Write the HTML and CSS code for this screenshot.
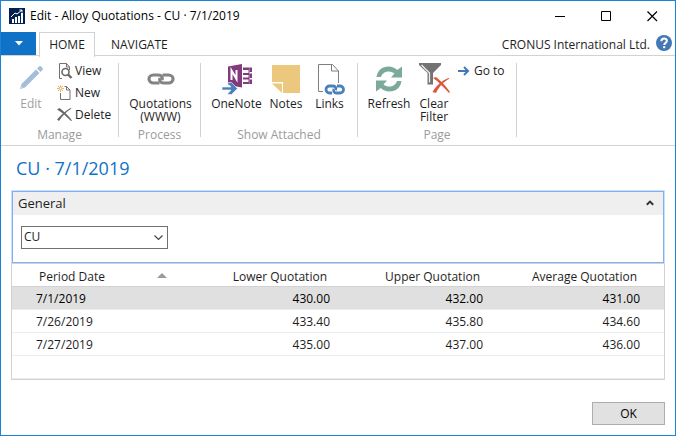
FILE: index.html
```html
<!DOCTYPE html>
<html lang="en">
<head>
<meta charset="utf-8">
<title>Edit - Alloy Quotations</title>
<link rel="stylesheet" href="styles.css">
</head>
<body>
<div class="window">
  <header class="titlebar">
    <svg class="app-icon" width="16" height="16" viewBox="0 0 16 16" aria-hidden="true">
      <rect width="16" height="16" fill="#04204f"/>
      <path d="M3 15v-4h2v4zM6 15V9h2v6zM9 15V8h2v7zM12 15V5h2v10z" fill="#fff"/>
      <path d="M2 9 6 5l2 1 5-4M10.500 2H13v2.500" fill="none" stroke="#fff"/>
    </svg>
    <h1 class="title">Edit - Alloy Quotations - CU · 7/1/2019</h1>
    <div class="window-buttons">
      <button class="window-button" aria-label="Minimize"><svg width="11" height="11" viewBox="0 0 11 11"><path d="M0 5.500h10" stroke="#000"/></svg></button>
      <button class="window-button" aria-label="Maximize"><svg width="11" height="11" viewBox="0 0 11 11"><path d="M.5.5h9v9h-9z" fill="none" stroke="#000"/></svg></button>
      <button class="window-button" aria-label="Close"><svg width="11" height="11" viewBox="0 0 11 11"><path d="m.5.500 9.500 9.500M10 .5.500 10" stroke="#000" stroke-width="1.200"/></svg></button>
    </div>
  </header>

  <nav class="tabs">
    <button class="file-menu" aria-label="Application menu"><svg width="8" height="5" viewBox="0 0 8 5"><path d="M0 0h8L4 4.500z" fill="#fff"/></svg></button>
    <button class="tab tab-active">HOME</button>
    <button class="tab">NAVIGATE</button>
    <span class="company">CRONUS International Ltd.</span>
    <button class="help" aria-label="Help"><svg width="16" height="16" viewBox="0 0 16 16"><circle cx="8" cy="8" r="8" fill="#4378b5"/><path d="M5.400 6.300c0-3.700 5.500-3.400 5.500-.5C10.900 7.900 8.200 7.900 8.200 10" fill="none" stroke="#fff" stroke-width="2"/><path d="M7.100 11.200h2.200v2H7.100z" fill="#fff"/></svg></button>
  </nav>

  <section class="ribbon" aria-label="Actions">
    <div class="group">
      <div class="actions actions-start">
        <button class="action action-edit" disabled>
          <svg width="24" height="28" viewBox="0 0 24 28"><path d="m1 24 1.500-5L17 4.500l3.500 3.500L6 22.500zM18 3.500l2-2c.6-.6 1.500-.6 2 0L23.500 3c.6.6.6 1.500 0 2l-2 2z" fill="#a3bddb"/><path d="m1 24 1-3 2 2z" fill="#c8d8ea"/></svg>
          <span>Edit</span>
        </button>
        <div class="small-actions">
          <button class="small-action"><svg width="16" height="16" viewBox="0 0 16 16"><path d="M5 15.500H2.500V.5h7l3 3.500v3M9.500.5V4h3" fill="none" stroke="#737373"/><circle cx="8.500" cy="9" r="3.500" fill="#fff" stroke="#686868" stroke-width="1.600"/><path d="m11 11.500 3.500 3.500" stroke="#686868" stroke-width="2.400"/></svg><span>View</span></button>
          <button class="small-action"><svg width="16" height="16" viewBox="0 0 16 16"><path d="M3.500 8v6.500h9.500V5L9.500 1.500H7.500M9.500 1.500V5H13" fill="none" stroke="#737373"/><path d="M3.500 0v7M0 3.500h7M1 1l5 5M6 1 1 6" stroke="#e8ad55" stroke-width=".9"/><circle cx="3.500" cy="3.500" r="1" fill="#fff"/></svg><span>New</span></button>
          <button class="small-action"><svg width="16" height="16" viewBox="0 0 16 16"><path d="M0 2.500 2.500 1C6 3.500 11 8 15 13.500l-1 .5C9 9 4.500 5 0 2.500z" fill="#686868"/><path d="M14.500 1.500C9 5 5 9 2 14L0 12.500C4 8 8 4 13.500 1z" fill="#686868"/></svg><span>Delete</span></button>
        </div>
      </div>
      <h2 class="group-name">Manage</h2>
    </div>
    <div class="group">
      <div class="actions">
        <button class="action">
          <svg width="28" height="28" viewBox="0 0 28 28"><g fill="none" stroke="#848484" stroke-width="3.200"><path d="M12.500 18H6.500a4.500 4 0 0 1 0-8h5c3 0 4.500 2.500 3.500 5"/><path d="M15.500 10h6a4.500 4 0 0 1 0 8h-5c-3 0-4.500-2.500-3.500-5"/></g></svg>
          <span>Quotations<br>(WWW)</span>
        </button>
      </div>
      <h2 class="group-name">Process</h2>
    </div>
    <div class="group">
      <div class="actions">
        <button class="action action-onenote">
          <svg width="32" height="32" viewBox="0 0 32 32"><path d="M7 3.500 21 1v23.500L7 22z" fill="#823a7c"/><path d="M10.500 17V7.500l5 8.500V7" fill="none" stroke="#fff" stroke-width="2"/><path d="M22 4.500h6.500v16.500H22v-2h5.500v-2.500H22v-2h5.500V12H22v-2h5.500V7H22z" fill="#823a7c"/><path d="M28.500 4.500H31V9h-2.500zM28.500 10.500H31V15h-2.500zM28.500 16.500H31V21h-2.500z" fill="#823a7c"/><path d="M1 24h9l-4-4.500h4.500l6 6-6 6H6l4-4.500H1z" fill="#4a80bb" stroke="#fff" stroke-width=".6"/></svg>
          <span>OneNote</span>
        </button>
        <button class="action action-notes">
          <svg width="28" height="28" viewBox="0 0 28 28"><path d="M0 0h28v28H11V17H0zM0 18.500h10V28z" fill="#ecc77e"/></svg>
          <span>Notes</span>
        </button>
        <button class="action action-links">
          <svg width="30" height="32" viewBox="0 0 30 32"><path d="M8 28.500H3.500V1.500h14l6 6.500V20M16.500 1.500V8h7" fill="#fff" stroke="#7f7f7f"/><g fill="none" stroke="#fff" stroke-width="5"><path d="M17 30h-2.500a3.500 3.500 0 0 1 0-7H18c2.500 0 3.500 2 2.500 4"/><path d="M22 23h3a3.500 3.500 0 0 1 0 7h-3.500c-2.500 0-3.500-2-2.500-4"/></g><g fill="none" stroke="#4a80bb" stroke-width="2.800"><path d="M17 30h-2.500a3.500 3.500 0 0 1 0-7H18c2.500 0 3.500 2 2.500 4"/><path d="M22 23h3a3.500 3.500 0 0 1 0 7h-3.500c-2.500 0-3.500-2-2.500-4"/></g></svg>
          <span>Links</span>
        </button>
      </div>
      <h2 class="group-name">Show Attached</h2>
    </div>
    <div class="group">
      <div class="actions actions-start">
        <button class="action action-refresh">
          <svg width="28" height="28" viewBox="0 0 28 28"><path d="M1.500 12C2.500 5.500 7 1.500 13.500 1.500c3.500 0 6.500 1.300 8.700 3.500L27 1.500V12.500H16l3.500-4C14.500 4.500 7.500 6.500 6 12z" fill="#7baa98"/><path transform="rotate(180 14 14)" d="M1.500 12C2.500 5.500 7 1.500 13.500 1.500c3.500 0 6.500 1.300 8.700 3.500L27 1.500V12.500H16l3.500-4C14.500 4.500 7.500 6.500 6 12z" fill="#7baa98"/></svg>
          <span>Refresh</span>
        </button>
        <button class="action action-filter">
          <svg width="32" height="32" viewBox="0 0 32 32"><path d="M1 0h22v2l-8 8v11.500H9.500V10L1 2z" fill="#737373"/><path d="m3.500 2 8 8v9.500" fill="none" stroke="#eee" stroke-width="1.300"/><path d="m15 15 3-1c5 4 10 9 14 15l-1 1c-5-5-10-11-16-15z" fill="#db593e"/><path d="M31.500 15.500C25 19 21 24 18 30l-3.500-1C18 23 23 18 30.500 15z" fill="#db593e"/></svg>
          <span>Clear<br>Filter</span>
        </button>
        <div class="small-actions">
          <button class="small-action small-goto"><svg width="12" height="16" viewBox="0 0 12 16"><path d="M0 8h10M6 4l4 4-4 4" fill="none" stroke="#4378b5" stroke-width="2"/></svg><span>Go to</span></button>
        </div>
      </div>
      <h2 class="group-name">Page</h2>
    </div>
  </section>

  <main class="content">
    <h2 class="page-title">CU · 7/1/2019</h2>
    <section class="panel">
      <button class="panel-head" aria-expanded="true"><span>General</span><svg width="8" height="6" viewBox="0 0 8 6"><path d="m.8 4.800 3.200-3.200 3.200 3.200" fill="none" stroke="#333" stroke-width="2"/></svg></button>
      <div class="panel-body">
        <div class="combo">
          <select aria-label="Alloy"><option>CU</option></select>
          <svg class="combo-arrow" width="9" height="6" viewBox="0 0 9 6" aria-hidden="true"><path d="m.5.500 4 4 4-4" fill="none" stroke="#444" stroke-width="1.200"/></svg>
        </div>
      </div>
    </section>
    <table class="quotes">
      <colgroup><col class="col-date"><col class="col-number"><col class="col-number"><col></colgroup>
      <thead>
        <tr><th scope="col"><div class="sorted">Period Date<svg width="10" height="9" viewBox="0 0 10 9" aria-hidden="true"><path d="M0 5 5 0l5 5z" fill="#9b9b9b"/></svg></div></th><th scope="col">Lower Quotation</th><th scope="col">Upper Quotation</th><th scope="col">Average Quotation</th></tr>
      </thead>
      <tbody>
        <tr class="selected"><td>7/1/2019</td><td>430.00</td><td>432.00</td><td>431.00</td></tr>
        <tr><td>7/26/2019</td><td>433.40</td><td>435.80</td><td>434.60</td></tr>
        <tr><td>7/27/2019</td><td>435.00</td><td>437.00</td><td>436.00</td></tr>
        <tr><td></td><td></td><td></td><td></td></tr>
      </tbody>
    </table>
    <footer class="footer"><button class="ok">OK</button></footer>
  </main>
</div>
</body>
</html>
```
FILE: styles.css
```css
* { box-sizing: border-box; }
body {
  margin: 0;
  background: #fff;
  color: #1e1e1e;
  font: 12px/16px "Open Sans", "Noto Sans", sans-serif;
}
button {
  margin: 0;
  padding: 0;
  border: 0;
  background: none;
  color: inherit;
  font: inherit;
}
h1, h2 { margin: 0; font: inherit; }
svg { display: block; flex: none; }

.window {
  display: flex;
  flex-direction: column;
  min-height: 100vh;
  border: 1px solid #1883d7;
}

.titlebar {
  display: flex;
  align-items: center;
  height: 30px;
  padding-left: 8px;
}
.title { flex: 1; margin-left: 5px; color: #000; white-space: nowrap; }
.window-buttons { display: flex; }
.window-button { display: grid; place-items: center; width: 46px; height: 28px; }

.tabs {
  display: flex;
  align-items: stretch;
  height: 25px;
  padding-right: 3px;
  border-bottom: 1px solid #d2d2d2;
}
.file-menu {
  display: grid;
  place-items: center;
  width: 35px;
  height: 23px;
  margin: 1px 3px 0 0;
  background: #1072c6;
}
.tab { padding: 3px 15px 0; border: 1px solid transparent; border-bottom: 0; }
.tab-active {
  width: 56px;
  height: 25px;
  margin-top: 1px;
  padding: 0;
  background: #fff;
  border-color: #d2d2d2;
}
.company { margin: 6px 6px 0 auto; white-space: nowrap; }
.help { align-self: center; }

.ribbon {
  display: grid;
  grid-template-columns: 118px 82px 157px 159px;
  height: 90px;
  padding: 7px 0 8px;
  border-bottom: 1px solid #d2d2d2;
}
.group {
  display: flex;
  flex-direction: column;
  min-height: 0;
  border-right: 1px solid #d2d2d2;
}
.group-name { color: #9b9b9b; text-align: center; }
.actions { display: flex; flex: none; justify-content: center; height: 64px; padding-left: 2px; }
.actions-start { justify-content: flex-start; padding-left: 7px; }
.action {
  display: grid;
  grid-template-rows: 32px auto;
  align-content: start;
  align-items: center;
  justify-items: center;
  row-gap: 2px;
  line-height: 13px;
  white-space: nowrap;
}
.action-edit { width: 46px; color: #a0a0a0; }
.action-onenote { width: 52px; }
.action-notes { width: 47px; }
.action-links { width: 40px; }
.action-refresh { width: 48px; }
.action-filter { width: 42px; }
.small-actions { display: flex; flex: 1; flex-direction: column; padding-left: 3px; }
.small-action { display: flex; flex: none; align-items: center; gap: 2px; height: 22px; padding-bottom: 6px; white-space: nowrap; }
.small-goto { gap: 4px; }

.content { display: flex; flex: 1; flex-direction: column; padding: 0 10px 10px; }
.page-title {
  padding: 10px 5px 9px;
  color: #1072c6;
  font-size: 18px;
  line-height: 25px;
}
.panel { border: 1px solid #7eb0f7; outline: 1px solid #c9dffb; margin: 1px 1px 0; }
.panel-head {
  display: flex;
  align-items: center;
  justify-content: space-between;
  width: 100%;
  height: 23px;
  padding: 0 9px 2px 5px;
  background: #efefef;
  font-size: 13px;
}
.panel-body { padding: 11px 8px 13px; }
.combo { position: relative; width: 147px; }
.combo select {
  display: block;
  width: 100%;
  height: 23px;
  padding: 0 20px 2px 2px;
  appearance: none;
  border: 1px solid #707070;
  border-radius: 0;
  background: #fff;
  color: inherit;
  font: inherit;
}
.combo-arrow { position: absolute; top: 9px; right: 5px; pointer-events: none; }

.quotes {
  width: 100%;
  border: 1px solid #d2d2d2;
  border-spacing: 0;
  table-layout: fixed;
}
.col-date { width: 172px; }
.col-number { width: 153px; }
.quotes th, .quotes td {
  height: 23px;
  padding: 2px 7px 0 0;
  border-bottom: 1px solid #ececec;
  text-align: right;
}
.quotes th { padding: 4px 10px 0 0; border-color: #d2d2d2; font-weight: 400; }
.quotes td:first-child { padding-left: 24px; text-align: left; }
.quotes th:first-child { padding-right: 17px; padding-left: 27px; }
.quotes td:last-child { padding-right: 24px; }
.quotes th:last-child { padding-right: 27px; }
.sorted { display: flex; align-items: center; justify-content: space-between; }
.selected { background: #e0e0e0; color: #000; }

.footer { display: flex; justify-content: flex-end; margin-top: auto; }
.ok { width: 73px; height: 23px; border: 1px solid #adadad; background: #e1e1e1; color: #000; }
```
